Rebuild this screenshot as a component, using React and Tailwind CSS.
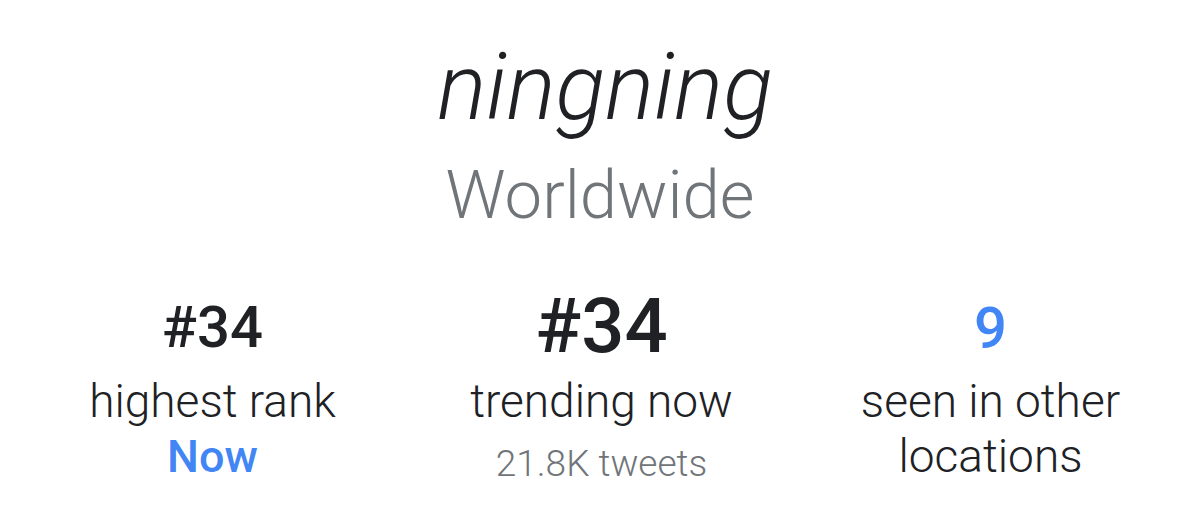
function Stat({ children, className }) {
  return <div className={`flex flex-col items-center ${className}`}>{children}</div>;
}

export default function App() {
  return (
    <div
      className="flex h-[524px] w-[1200px] flex-col items-center overflow-hidden bg-white text-[#202124]"
      style={{ fontFamily: "Roboto, 'Noto Sans', sans-serif" }}
    >
      <div className="ml-[10px] mt-[42px] text-[92px] font-light italic leading-none">ningning</div>
      <div className="mt-[28px] text-[67px] font-light leading-none text-[#70757a]">Worldwide</div>

      <div className="mt-[59px] grid w-full grid-cols-3 pl-[18px] pr-[15px]">
        <Stat className="pt-[10px]">
          <div className="text-[58px] font-medium leading-none">#34</div>
          <div className="mt-[18px] text-[46px] font-light leading-[55px]">highest rank</div>
          <div className="text-[45px] font-medium leading-[55px] text-[#4285f4]">Now</div>
        </Stat>
        <Stat>
          <div className="text-[76px] font-medium leading-none">#34</div>
          <div className="mt-[10px] text-[46px] font-light leading-[55px]">trending now</div>
          <div className="mt-[7px] text-[37px] font-light leading-[55px] text-[#70757a]">21.8K tweets</div>
        </Stat>
        <Stat className="pt-[11px]">
          <div className="text-[58px] font-medium leading-none text-[#4285f4]">9</div>
          <div className="mt-[17px] text-center text-[46px] font-light leading-[55px]">
            seen in other
            <br />
            locations
          </div>
        </Stat>
      </div>
    </div>
  );
}
